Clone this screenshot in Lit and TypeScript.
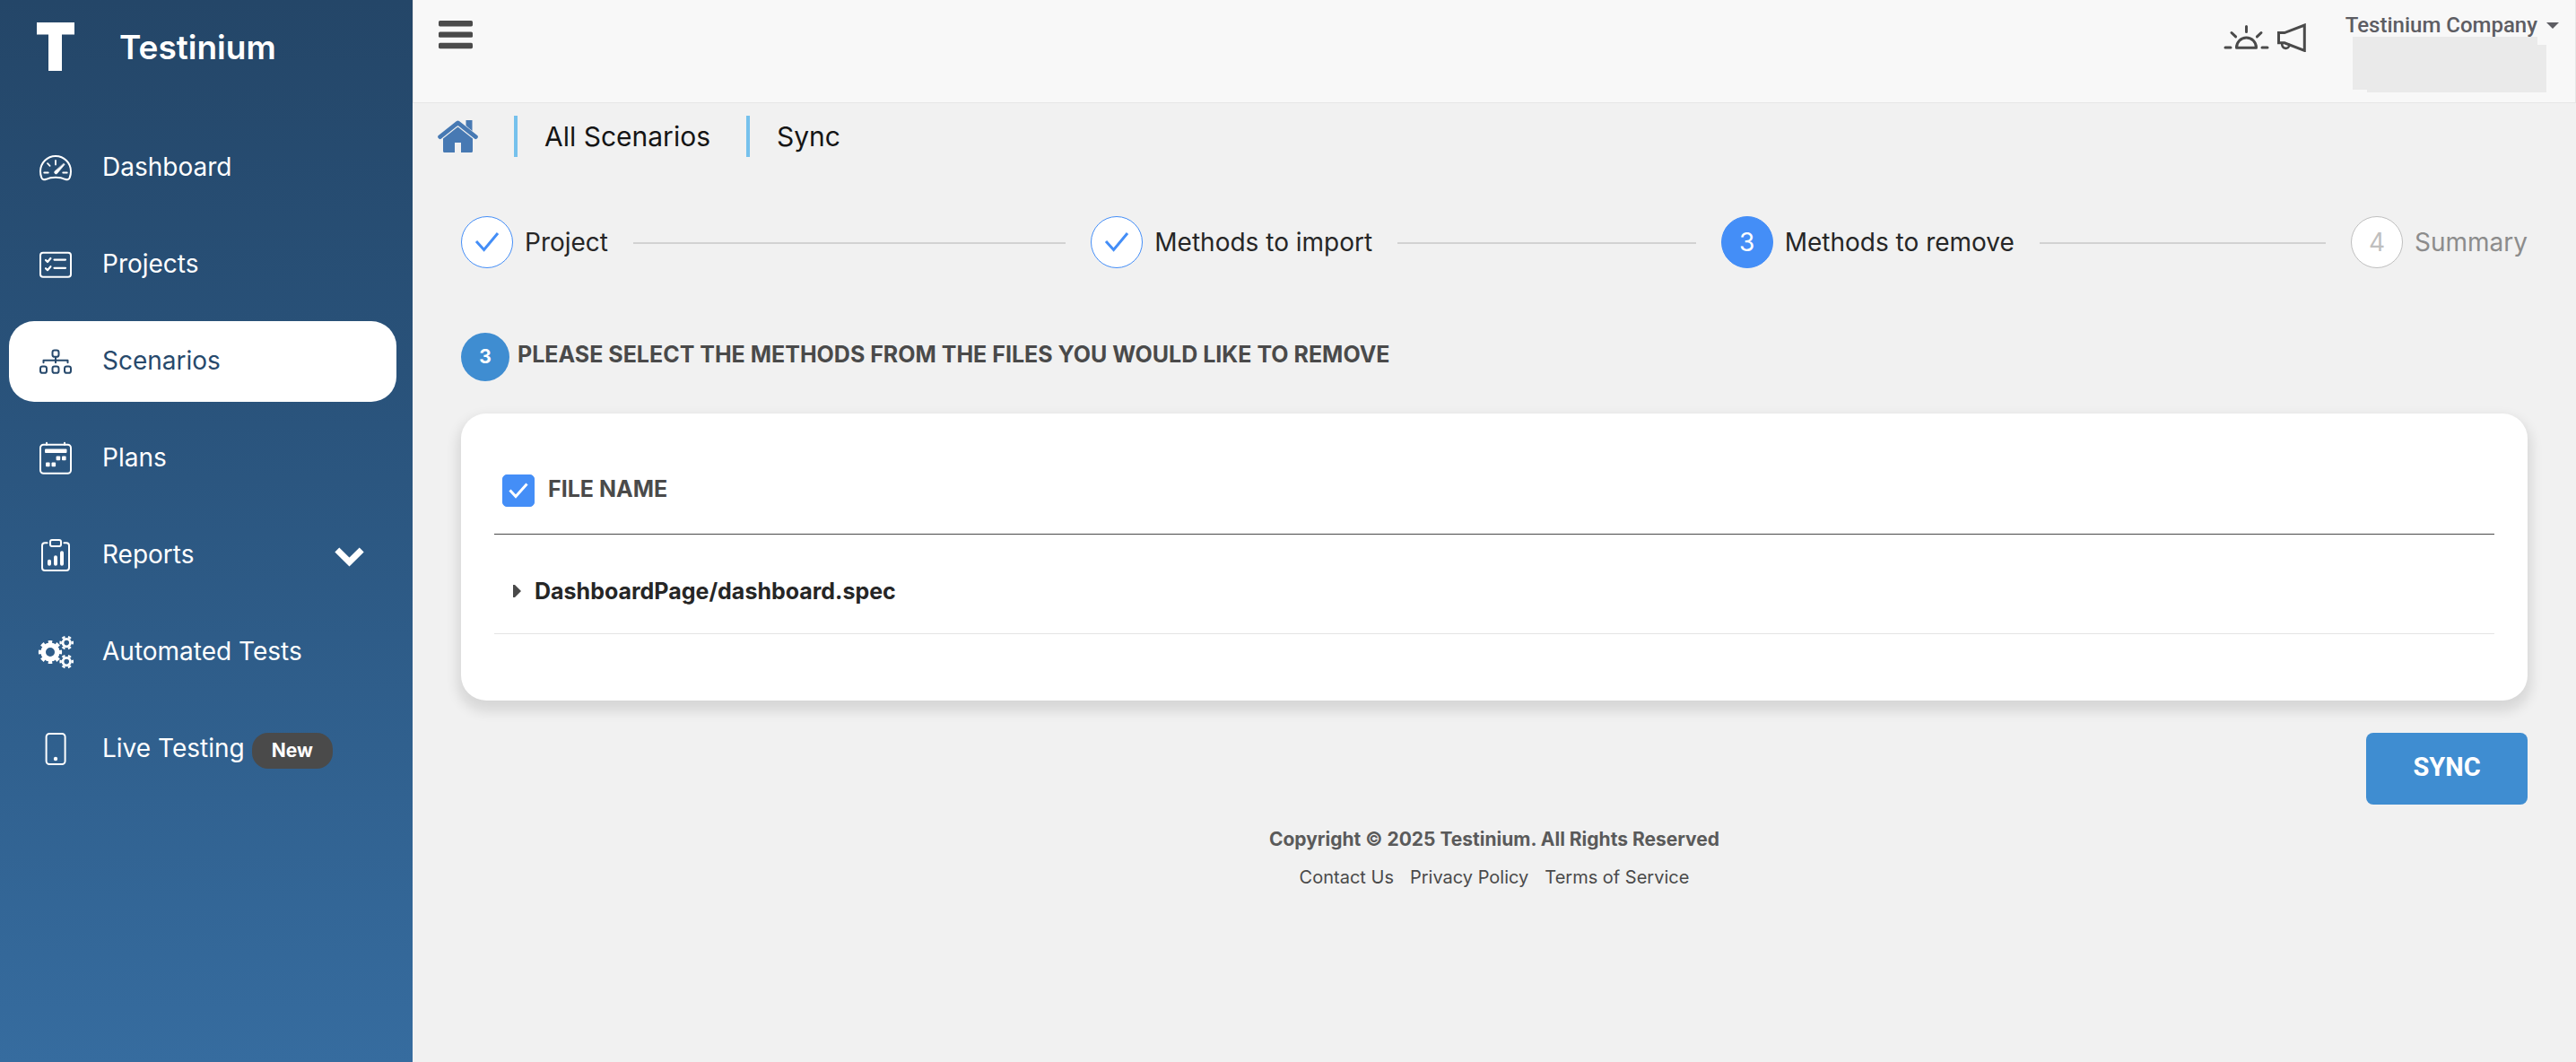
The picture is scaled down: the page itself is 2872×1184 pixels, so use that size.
import { LitElement, html, svg, css, nothing } from "lit";
import { customElement, state } from "lit/decorators.js";
import { classMap } from "lit/directives/class-map.js";

const gear = (cx: number, cy: number, ring: number, ringWidth: number, tip: number, tipWidth: number, teeth: number) => svg`
  <circle cx=${cx} cy=${cy} r=${ring} stroke-width=${ringWidth} />
  <circle cx=${cx} cy=${cy} r=${tip} stroke-width=${tipWidth} pathLength=${teeth * 2} stroke-dasharray="1 1" stroke-dashoffset="0.5" />`;

const icons = {
  dashboard: svg`
    <path d="M7.5 30.8C13 27.9 23 27.9 28.5 30.8C31 31.8 33 31 33.7 29C34.6 26.8 35 24.5 35 22A17 17 0 0 0 1 22C1 24.5 1.4 26.8 2.3 29C3 31 5 31.8 7.5 30.8Z" stroke-width="2" />
    <path d="M18 10v4.5M9 13.2l2.6 2.6M5.2 23.5h4.6M26.2 23.5h4.6" stroke-width="1.8" />
    <path d="M27.2 13.4L28.2 14.3L19.6 24.6A1.9 1.9 0 0 1 16.8 22.2Z" fill="currentColor" stroke-width="0.6" />`,
  projects: svg`
    <rect x="1" y="4.8" width="34" height="27" rx="3" stroke-width="2" />
    <path d="M16.5 12.6h12.5M16.5 21.8h12.5M7 13l2 2l3.4-4M7 22.2l2 2l3.4-4" stroke-width="2.2" />`,
  scenarios: svg`
    <rect x="14.5" y="5.4" width="7" height="7.4" rx="2.4" stroke-width="2" />
    <rect x="1" y="23.4" width="7" height="7.4" rx="2.4" stroke-width="2" />
    <rect x="14.5" y="23.4" width="7" height="7.4" rx="2.4" stroke-width="2" />
    <rect x="28" y="23.4" width="7" height="7.4" rx="2.4" stroke-width="2" />
    <path d="M4.5 19.2v-2.4h27v2.4M18 13v6.2" stroke-width="2" />`,
  plans: svg`
    <rect x="1" y="2.8" width="34" height="32" rx="3.5" stroke-width="2" />
    <path d="M8 0.8v2M28 0.8v2" stroke-width="2" />
    <g fill="currentColor" stroke="none">
      <rect x="6" y="7.6" width="24.5" height="4.4" rx="1" />
      <rect x="18.6" y="15.6" width="4.6" height="4.6" rx="1" />
      <rect x="25" y="15.6" width="4.6" height="4.6" rx="1" />
      <rect x="7" y="22.6" width="4.6" height="4.6" rx="1" />
      <rect x="13.5" y="22.6" width="4.6" height="4.6" rx="1" />
    </g>`,
  reports: svg`
    <path d="M8.6 4.2H6A3 3 0 0 0 3 7.2V32a3 3 0 0 0 3 3H30a3 3 0 0 0 3-3V7.2a3 3 0 0 0-3-3H27.4" stroke-width="2" />
    <rect x="12" y="1" width="12" height="7" rx="2" stroke-width="2" />
    <path d="M11 24.8v3M18 20.2v7.6M25 15.2v12.6" stroke-width="4" />`,
  automated: svg`${gear(12, 18, 7.8, 5.6, 11.6, 3, 8)}${gear(30.2, 7.6, 4.2, 2.8, 6.6, 2.4, 6)}${gear(30.2, 28.6, 4.2, 2.8, 6.6, 2.4, 6)}`,
  live: svg`
    <rect x="7.6" y="0.9" width="21" height="34.2" rx="3.5" stroke-width="2" />
    <circle cx="18" cy="29" r="2.2" fill="currentColor" stroke="none" />`,
};

interface NavItem {
  icon: keyof typeof icons;
  label: string;
  active?: boolean;
  badge?: string;
  expandable?: boolean;
}

const navItems: NavItem[] = [
  { icon: "dashboard", label: "Dashboard" },
  { icon: "projects", label: "Projects" },
  { icon: "scenarios", label: "Scenarios", active: true },
  { icon: "plans", label: "Plans" },
  { icon: "reports", label: "Reports", expandable: true },
  { icon: "automated", label: "Automated Tests" },
  { icon: "live", label: "Live Testing", badge: "New" },
];

@customElement("app-sidebar")
export class AppSidebar extends LitElement {
  static styles = css`
    :host {
      display: block;
      box-sizing: border-box;
      padding: 0 18px 40px 10px;
      color: #fff;
      background: linear-gradient(#244668, #29527a 35%, #366c9f);
    }
    .brand {
      display: flex;
      align-items: center;
      gap: 50px;
      height: 104px;
      padding-left: 31px;
      color: inherit;
      font-size: 37px;
      font-weight: 600;
      text-decoration: none;
    }
    .logo {
      display: block;
      width: 42px;
      height: 54px;
    }
    .nav {
      display: flex;
      flex-direction: column;
      gap: 18px;
      margin-top: 38px;
    }
    .item {
      display: flex;
      align-items: center;
      height: 90px;
      padding: 0 36px 0 34px;
      border-radius: 28px;
      color: inherit;
      font-size: 28px;
      text-decoration: none;
    }
    .label {
      padding-bottom: 2px;
    }
    .item.active {
      color: #27496c;
      background: #fff;
    }
    .icon {
      width: 36px;
      height: 36px;
      margin-right: 34px;
      overflow: visible;
      fill: none;
      stroke: currentColor;
      stroke-linecap: round;
      stroke-linejoin: round;
    }
    .icon.automated {
      stroke-linecap: butt;
    }
    .badge {
      margin: 4px 0 0 8px;
      padding: 0 22px;
      border-radius: 18px;
      background: #4a4a4a;
      font-size: 21px;
      font-weight: 700;
      line-height: 40px;
    }
    .chevron {
      width: 33px;
      height: 22px;
      margin: 4px 0 0 auto;
      fill: none;
      stroke: currentColor;
      stroke-width: 7;
    }
  `;

  render() {
    return html`
      <a class="brand" href="#home">
        <svg class="logo" viewBox="0 0 42 54" aria-hidden="true">
          <rect width="42" height="13.5" fill="#fff" />
          <rect x="13" width="15" height="54" fill="#fff" />
        </svg>
        <span>Testinium</span>
      </a>
      <nav class="nav">
        ${navItems.map(
          (item) => html`
            <a class=${classMap({ item: true, active: !!item.active })} href="#${item.icon}">
              <svg class="icon ${item.icon}" viewBox="0 0 36 36" aria-hidden="true">${icons[item.icon]}</svg>
              <span class="label">${item.label}</span>
              ${item.badge ? html`<span class="badge">${item.badge}</span>` : nothing}
              ${item.expandable
                ? html`<svg class="chevron" viewBox="0 0 33 22" aria-hidden="true"><path d="M2.8 3L16.5 16.6L30.2 3" /></svg>`
                : nothing}
            </a>
          `
        )}
      </nav>
    `;
  }
}

@customElement("app-header")
export class AppHeader extends LitElement {
  static styles = css`
    :host {
      display: flex;
      box-sizing: border-box;
      height: 115px;
      padding: 0 18px 0 28px;
      border: 1px solid #e6e6e6;
      border-top: 0;
      background: #f8f8f8;
      color: #4a4a4a;
    }
    button {
      padding: 0;
      border: 0;
      background: none;
      color: inherit;
      font: inherit;
      cursor: pointer;
    }
    svg {
      display: block;
    }
    .menu {
      align-self: flex-start;
      margin-top: 23px;
    }
    .tools {
      display: flex;
      align-items: flex-start;
      gap: 9px;
      margin: 26px 44px 0 auto;
    }
    .line {
      fill: none;
      stroke: currentColor;
      stroke-width: 3;
      stroke-linecap: round;
      stroke-linejoin: round;
    }
    .account {
      padding-top: 15px;
      color: #5d5d63;
      font-family: Roboto, "Liberation Sans", sans-serif;
      font-weight: 500;
    }
    .company {
      display: flex;
      align-items: center;
      gap: 10px;
      font-size: 24px;
      line-height: 26px;
    }
    .mask {
      margin-left: 8px;
    }
  `;

  render() {
    return html`
      <button class="menu" aria-label="Toggle menu">
        <svg width="38" height="32" viewBox="0 0 38 32" fill="currentColor" aria-hidden="true">
          <rect width="38" height="6.4" rx="1.6" />
          <rect y="12.4" width="38" height="6.4" rx="1.6" />
          <rect y="24.8" width="38" height="6.4" rx="1.6" />
        </svg>
      </button>
      <div class="tools">
        <button aria-label="Theme">
          <svg class="line" width="51" height="32" viewBox="0 0 51 32" aria-hidden="true">
            <path d="M14.5 27.3V27A11 11 0 0 1 36.5 27V27.3ZM25.5 3.5v6M9 10.5l4.6 4.4M42 10.5l-4.6 4.4M2 27h6M43 27h6" />
          </svg>
        </button>
        <button aria-label="Announcements">
          <svg class="line" width="32" height="32" viewBox="0 0 32 32" aria-hidden="true">
            <path stroke-linejoin="miter" stroke-width="3" d="M1.5 10.6H8L30.3 2V30.4L8 21.8H1.5Z" />
            <path d="M5.4 22.4A4.2 4.2 0 1 0 13.6 24" stroke-width="2.6" />
          </svg>
        </button>
      </div>
      <div class="account">
        <button class="company">
          Testinium Company
          <svg width="14" height="7" viewBox="0 0 14 7" fill="currentColor" aria-hidden="true"><path d="M0 0H14L7 7Z" /></svg>
        </button>
        <svg class="mask" width="216" height="62" viewBox="0 0 216 62" aria-hidden="true">
          <path fill="#eaeaea" d="M0 0H206V9H216V62H16V59H0Z" />
        </svg>
      </div>
    `;
  }
}

type StepStatus = "done" | "current" | "waiting";

const steps: { label: string; status: StepStatus }[] = [
  { label: "Project", status: "done" },
  { label: "Methods to import", status: "done" },
  { label: "Methods to remove", status: "current" },
  { label: "Summary", status: "waiting" },
];

@customElement("step-bar")
export class StepBar extends LitElement {
  static styles = css`
    :host {
      display: block;
    }
    .steps {
      display: flex;
      margin: 0;
      padding: 0;
      list-style: none;
    }
    .step {
      display: flex;
      flex: 1 1 0;
      align-items: center;
      color: #262626;
      font-size: 28px;
      white-space: nowrap;
    }
    .step:last-child {
      flex: none;
    }
    .step:not(:last-child)::after {
      content: "";
      flex: 1;
      height: 2px;
      margin: 2px 28px 0;
      background: #d2d2d2;
    }
    .dot {
      display: grid;
      place-items: center;
      box-sizing: border-box;
      width: 58px;
      height: 58px;
      margin-right: 13px;
      border: 1px solid #448ef7;
      border-radius: 50%;
      background: #fff;
      color: #448ef7;
    }
    .current .dot {
      background: #448ef7;
      color: #fff;
    }
    .waiting {
      color: #8c8c8c;
    }
    .waiting .dot {
      border-color: #bfbfbf;
      color: #bfbfbf;
    }
    .check {
      width: 28px;
      height: 22px;
      fill: none;
      stroke: currentColor;
      stroke-width: 3;
    }
  `;

  render() {
    return html`
      <ol class="steps">
        ${steps.map(
          (step, index) => html`
            <li class="step ${step.status}">
              <span class="dot">
                ${step.status === "done"
                  ? html`<svg class="check" viewBox="0 0 28 22" aria-hidden="true"><path d="M2 10L10.6 19.4L26 1" /></svg>`
                  : index + 1}
              </span>
              <span>${step.label}</span>
            </li>
          `
        )}
      </ol>
    `;
  }
}

@customElement("app-root")
export class AppRoot extends LitElement {
  static styles = css`
    :host {
      display: grid;
      grid-template-columns: 460px minmax(0, 1fr);
      min-height: 100vh;
      background: #f1f1f1;
      color: #262626;
      font-family: Inter, "Liberation Sans", sans-serif;
    }
    a {
      color: inherit;
      text-decoration: none;
    }
    svg {
      display: block;
    }
    .crumbs {
      display: flex;
      align-items: center;
      padding: 14px 28px 0;
      color: #151515;
      font-size: 30px;
      line-height: 46px;
    }
    .crumb {
      padding: 0 40px 0 30px;
      border-left: 4px solid #76c1ec;
    }
    .home {
      margin-right: 40px;
      color: #4779b3;
    }
    .content {
      padding: 66px 54px 0;
    }
    .title {
      display: flex;
      align-items: center;
      gap: 9px;
      margin: 72px 0 36px;
      color: #4a4a4a;
      font-size: 25px;
      font-weight: 700;
      line-height: 48px;
    }
    .title-text {
      padding-bottom: 6px;
    }
    .number {
      width: 54px;
      border-radius: 50%;
      background: #3f8dd1;
      color: #fff;
      font-size: 21px;
      line-height: 54px;
      text-align: center;
    }
    .card {
      padding: 38px 37px 74px;
      border-radius: 28px;
      background: #fff;
      box-shadow: 0 8px 14px 4px rgba(0, 0, 0, 0.11);
    }
    .files {
      width: 100%;
      border-collapse: collapse;
      font-size: 25px;
      text-align: left;
    }
    .head {
      height: 96px;
      padding: 0 9px;
      border-bottom: 1px solid #4a4a4a;
      color: #4a4a4a;
    }
    .all {
      display: flex;
      align-items: center;
      gap: 15px;
    }
    .all-text {
      padding-bottom: 4px;
    }
    .tick {
      display: grid;
      place-items: center;
    }
    .tick > * {
      grid-area: 1 / 1;
    }
    .box {
      width: 36px;
      height: 36px;
      margin: 0;
      border: 1px solid #448ef7;
      border-radius: 5px;
      appearance: none;
      background: #fff;
    }
    .box:checked {
      background: #448ef7;
    }
    .mark {
      pointer-events: none;
      fill: none;
      stroke: #fff;
      stroke-width: 3;
    }
    .cell {
      height: 94px;
      padding: 16px 21px 0;
      border-bottom: 1px solid #e4e4e4;
    }
    .file {
      display: flex;
      align-items: center;
      gap: 14px;
      padding: 0;
      border: 0;
      background: none;
      color: #262626;
      font: inherit;
      font-weight: 700;
      cursor: pointer;
    }
    .actions {
      display: flex;
      justify-content: flex-end;
      margin-top: 36px;
    }
    .sync {
      width: 180px;
      height: 80px;
      padding: 0 0 4px;
      border: 0;
      border-radius: 8px;
      background: #3f8dd1;
      color: #fff;
      font-family: Roboto, "Liberation Sans", sans-serif;
      font-size: 29px;
      font-weight: 700;
      cursor: pointer;
    }
    .footer {
      margin-top: 18px;
      font-size: 20px;
      line-height: 42px;
      text-align: center;
    }
    .copyright {
      color: #5a5a5a;
      font-size: 21px;
      font-weight: 700;
    }
    .links {
      display: flex;
      justify-content: center;
      gap: 18px;
      color: #4a4a4a;
    }
  `;

  @state() private allSelected = true;

  render() {
    return html`
      <app-sidebar></app-sidebar>
      <div>
        <app-header></app-header>
        <nav class="crumbs" aria-label="Breadcrumb">
          <a class="home" href="#home" aria-label="Home">
            <svg width="45" height="36" viewBox="0 0 45 36" fill="currentColor" aria-hidden="true">
              <path d="M31.5 0H38.5V12L31.5 6Z" />
              <path d="M2.6 18.6L22.5 2.9L42.4 18.6" fill="none" stroke="currentColor" stroke-width="4.8" stroke-linecap="round" stroke-linejoin="round" />
              <path d="M22.5 7.4L39 20.6V34.4Q39 36 37.4 36H26V25H19V36H7.6Q6 36 6 34.4V20.6Z" />
            </svg>
          </a>
          <a class="crumb" href="#scenarios">All Scenarios</a>
          <span class="crumb" aria-current="page">Sync</span>
        </nav>
        <main class="content">
          <step-bar></step-bar>
          <h1 class="title">
            <span class="number">3</span>
            <span class="title-text">PLEASE SELECT THE METHODS FROM THE FILES YOU WOULD LIKE TO REMOVE</span>
          </h1>
          <section class="card">
            <table class="files">
              <thead>
                <tr>
                  <th class="head">
                    <label class="all">
                      <span class="tick">
                        <input
                          class="box"
                          type="checkbox"
                          .checked=${this.allSelected}
                          @change=${(e: Event) => (this.allSelected = (e.target as HTMLInputElement).checked)}
                        />
                        <svg class="mark" width="22" height="18" viewBox="0 0 22 18" aria-hidden="true"><path d="M1.5 8.5L8 15.5L20.5 1.5" /></svg>
                      </span>
                      <span class="all-text">FILE NAME</span>
                    </label>
                  </th>
                </tr>
              </thead>
              <tbody>
                <tr>
                  <td class="cell">
                    <button class="file" aria-expanded="false">
                      <svg width="10" height="14" viewBox="0 0 10 14" fill="#4a4a4a" aria-hidden="true"><path d="M0 0H2L9 7L2 14H0Z" /></svg>
                      DashboardPage/dashboard.spec
                    </button>
                  </td>
                </tr>
              </tbody>
            </table>
          </section>
          <div class="actions"><button class="sync">SYNC</button></div>
          <footer class="footer">
            <div class="copyright">Copyright © 2025 Testinium. All Rights Reserved</div>
            <div class="links">
              <a href="#contact">Contact Us</a>
              <a href="#privacy">Privacy Policy</a>
              <a href="#terms">Terms of Service</a>
            </div>
          </footer>
        </main>
      </div>
    `;
  }
}
